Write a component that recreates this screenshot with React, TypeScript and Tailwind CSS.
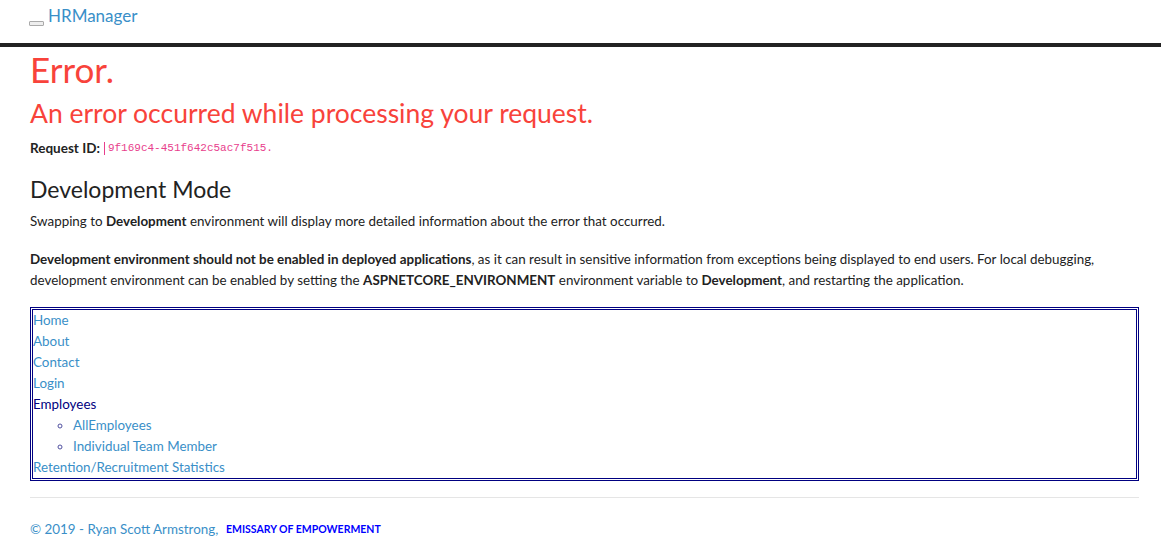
import React from "react";

const font = { fontFamily: "Lato, 'Open Sans', sans-serif" };

export default function App() {
  return (
    <div className="min-h-[551px] bg-white text-[13.4px] leading-[21px] text-[#222]" style={font}>
      <header className="h-[47px] border-b-4 border-[#222] bg-white">
        <div className="ml-[29px] flex items-center pt-[5px]">
          <button className="mt-[14px] h-[5px] w-[15px] rounded-[1px] border border-[#aaa] bg-[#eee]" />
          <a className="ml-[4px] text-[17px] leading-[22px] text-[#3a8fc8]" href="#">
            HRManager
          </a>
        </div>
      </header>

      <main className="ml-[30px] w-[1109px]">
        <h1 className="mt-[1px] text-[35px] leading-[43px] text-[#f8433b]">Error.</h1>
        <h2 className="mt-[5px] text-[26.5px] leading-[34px] text-[#f8433b]">
          An error occurred while processing your request.
        </h2>
        <p className="mt-[8px] flex h-[20px] items-center text-[13.5px] leading-[20px]">
          <strong>Request ID:</strong>
          <code className="ml-[4px] border-l border-[#e83e8c] pl-[3px] font-['Liberation_Mono',monospace] text-[11px] leading-[13px] text-[#e83e8c]">
            9f169c4-451f642c5ac7f515.
          </code>
        </p>

        <h3 className="mt-[17px] text-[23px] leading-[29px]">Development Mode</h3>
        <p className="mt-[7px]">
          Swapping to <strong>Development</strong> environment will display more detailed information about the error
          that occurred.
        </p>
        <p className="mt-[17px]">
          <strong>Development environment should not be enabled in deployed applications</strong>, as it can result in
          sensitive information from exceptions being displayed to end users. For local debugging, development
          environment can be enabled by setting the <strong>ASPNETCORE_ENVIRONMENT</strong> environment variable to{" "}
          <strong>Development</strong>, and restarting the application.
        </p>

        <nav className="mt-[16px] border-[3px] border-double border-[#000080]">
          <ul>
            <li><a href="#" className="text-[#3a8fc8]">Home</a></li>
            <li><a href="#" className="text-[#3a8fc8]">About</a></li>
            <li><a href="#" className="text-[#3a8fc8]">Contact</a></li>
            <li><a href="#" className="text-[#3a8fc8]">Login</a></li>
            <li className="text-[#000080]">
              Employees
              <ul className="list-[circle] pl-[40px] marker:text-[#5050a0]">
                <li><a href="#" className="text-[#3a8fc8]">AllEmployees</a></li>
                <li><a href="#" className="text-[#3a8fc8]">Individual Team Member</a></li>
              </ul>
            </li>
            <li><a href="#" className="text-[#3a8fc8]">Retention/Recruitment Statistics</a></li>
          </ul>
        </nav>

        <hr className="mt-[16px] border-t border-[#e5e5e5]" />
        <footer className="mt-[21px] flex items-center">
          <span className="w-[196px] text-[#3a8fc8]">© 2019 - Ryan Scott Armstrong,</span>
          <span className="text-[10.5px] font-bold uppercase text-[#0000ff]">Emissary of Empowerment</span>
        </footer>
      </main>
    </div>
  );
}
